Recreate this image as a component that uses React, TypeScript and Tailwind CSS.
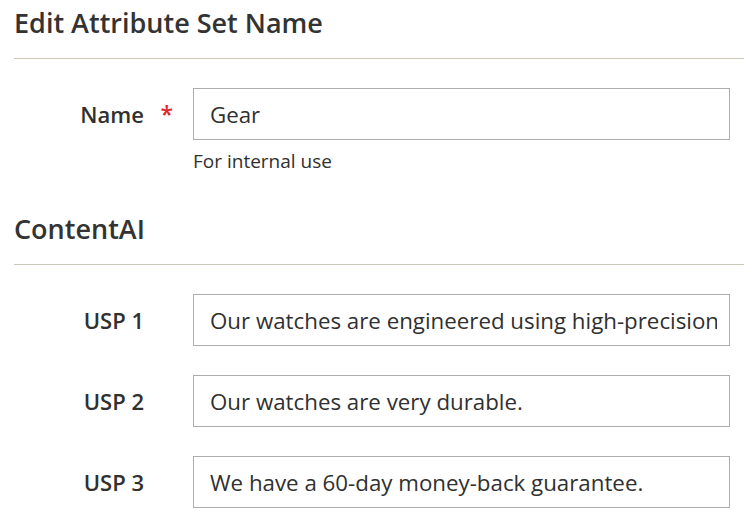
import React from "react";

const FONT = { fontFamily: '"Open Sans", "Liberation Sans", sans-serif' };

function SectionTitle({ children, className = "" }: { children: React.ReactNode; className?: string }) {
  return (
    <div className={className}>
      <h2 className="pl-[14px] text-[27px] leading-[32px] font-semibold text-[#333333]">{children}</h2>
      <div className="mt-[19px] ml-[14px] border-b border-[#cfc7b7]" />
    </div>
  );
}

function Field({
  label,
  value,
  required,
  note,
  className = "",
}: {
  label: string;
  value: string;
  required?: boolean;
  note?: string;
  className?: string;
}) {
  return (
    <div className={`flex items-start ${className}`}>
      <div className="relative flex h-[52px] w-[193px] shrink-0 items-center justify-end pr-[49px]">
        <span className="text-[22px] font-semibold text-[#303030]">{label}</span>
        {required && (
          <span className="absolute right-[20px] top-[15px] text-[23px] leading-none font-semibold text-[#e22626]">*</span>
        )}
      </div>
      <div className="w-[537px]">
        <input
          readOnly
          value={value}
          className="block h-[52px] w-full border border-[#adadad] bg-white pl-[16px] pr-[12px] text-[22.3px] text-[#303030] outline-none"
          style={FONT}
        />
        {note && <p className="mt-[8px] text-[19px] leading-[26px] text-[#303030]">{note}</p>}
      </div>
    </div>
  );
}

export default function App() {
  return (
    <div className="h-[518px] w-[744px] overflow-hidden bg-white pt-[7px]" style={FONT}>
      <SectionTitle>Edit Attribute Set Name</SectionTitle>
      <Field className="mt-[29px]" label="Name" value="Gear" required note="For internal use" />

      <SectionTitle className="mt-[39px]">ContentAI</SectionTitle>
      <div className="mt-[29px] flex flex-col gap-[29px]">
        <Field label="USP 1" value="Our watches are engineered using high-precision movements." />
        <Field label="USP 2" value="Our watches are very durable." />
        <Field label="USP 3" value="We have a 60-day money-back guarantee." />
      </div>
    </div>
  );
}
